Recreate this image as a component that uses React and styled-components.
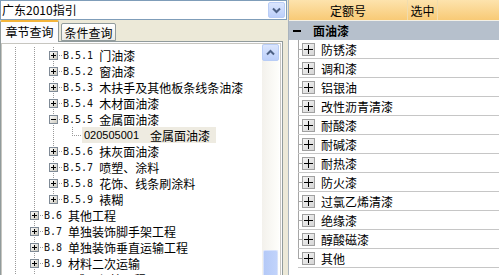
import React from "react";
import styled, { createGlobalStyle } from "styled-components";

const GlobalStyle = createGlobalStyle`
  html, body {
    margin: 0;
    padding: 0;
    background: #ece9d8;
  }
  body {
    font-family: "Noto Sans CJK SC", "DejaVu Sans", sans-serif;
    font-size: 12px;
    color: #000;
  }
`;

const Window = styled.div`
  display: flex;
  width: 499px;
  height: 275px;
  overflow: hidden;
  background: #ece9d8;
`;

const LeftPane = styled.div`
  width: 287px;
  display: flex;
  flex-direction: column;
  flex-shrink: 0;
`;

const Combo = styled.div`
  height: 20px;
  box-sizing: border-box;
  border: 1px solid #7f9db9;
  background: #fff;
  display: flex;
  align-items: center;
  justify-content: space-between;
  padding-left: 1px;
  line-height: 16px;
`;

const XpButton = styled.div`
  width: 17px;
  height: ${(p) => p.h || 16}px;
  box-sizing: border-box;
  border: 1px solid #b9cdf6;
  border-radius: 2px;
  background: linear-gradient(#dbe6fe, #bccffa);
  display: flex;
  align-items: center;
  justify-content: center;
  margin-right: ${(p) => p.mr || 0}px;
`;

const TabStrip = styled.div`
  height: 21px;
  display: flex;
  align-items: flex-end;
  position: relative;
  z-index: 1;
`;

const Tab = styled.div`
  box-sizing: border-box;
  width: ${(p) => p.w}px;
  height: ${(p) => (p.active ? 22 : 18)}px;
  margin-left: ${(p) => (p.active ? 0 : 2)}px;
  margin-bottom: ${(p) => (p.active ? -1 : 0)}px;
  border: 1px solid #919b9c;
  border-bottom: ${(p) => (p.active ? "none" : "1px solid #919b9c")};
  border-top: ${(p) => (p.active ? "2px solid #f4b53b" : "1px solid #919b9c")};
  border-radius: 2px 2px 0 0;
  background: ${(p) => (p.active ? "#fcfcfe" : "linear-gradient(#ffffff, #ecebe5)")};
  display: flex;
  align-items: center;
  justify-content: center;
  font-size: 12px;
  padding-bottom: ${(p) => (p.active ? 2 : 0)}px;
`;

const TabPanel = styled.div`
  width: 283px;
  flex: 1;
  box-sizing: border-box;
  border: 1px solid #919b9c;
  border-bottom: none;
  background: #fcfcfe;
  padding: 1px 1px 0 0;
  display: flex;
  min-height: 0;
`;

const TreeBox = styled.div`
  flex: 1;
  display: flex;
  border: 1px solid #c7c6c0;
  border-bottom: none;
  background: #fff;
  min-height: 0;
`;

const TreeBody = styled.div`
  flex: 1;
  padding-top: 3px;
  overflow: hidden;
`;

const dotsV = "repeating-linear-gradient(to bottom, #9a9a9a 0 1px, transparent 1px 2px)";
const dotsH = "repeating-linear-gradient(to right, #9a9a9a 0 1px, transparent 1px 2px)";

const Row = styled.div`
  height: 16px;
  display: flex;
  align-items: stretch;
  white-space: nowrap;
`;

const Guide = styled.div`
  width: 19px;
  flex-shrink: 0;
  background: ${(p) => (p.line ? dotsV : "none")};
  background-size: 1px 100%;
  background-position: 13px 0;
  background-repeat: no-repeat;
`;

const NodeCell = styled.div`
  width: 23px;
  flex-shrink: 0;
  display: flex;
  align-items: center;
  padding-left: 9px;
  box-sizing: border-box;
  background-image: ${dotsV}, ${dotsH};
  background-size: 1px ${(p) => (p.last ? "8px" : "100%")}, 10px 1px;
  background-position: 13px 0, 13px 8px;
  background-repeat: no-repeat;
`;

const Label = styled.div`
  display: flex;
  align-items: center;
  padding: 0 ${(p) => (p.selected ? 6 : 1)}px 0 ${(p) => (p.selected ? 2 : 0)}px;
  background: ${(p) => (p.selected ? "#eeebe1" : "transparent")};
  font-size: 12px;
`;

const Code = styled.span`
  font-family: "DejaVu Sans Mono", "Liberation Mono", monospace;
  font-size: 10px;
  white-space: pre;
  color: #111;
`;

const LeafCode = styled.span`
  font-family: "Liberation Sans", sans-serif;
  font-size: 11px;
  margin-right: 11px;
`;

const Scrollbar = styled.div`
  width: 17px;
  flex-shrink: 0;
  display: flex;
  flex-direction: column;
  align-items: center;
  background: linear-gradient(to right, #f3f1ec, #fefefb);
  margin-right: 1px;
`;

const Track = styled.div`
  flex: 1;
  display: flex;
  flex-direction: column;
  justify-content: flex-end;
  width: 100%;
  align-items: center;
`;

const Thumb = styled.div`
  width: 15px;
  height: 25px;
  box-sizing: border-box;
  border: 1px solid #d7e2fb;
  border-bottom: none;
  border-radius: 2px 2px 0 0;
  background: linear-gradient(to right, #b4c9f7, #c1d3fb);
`;

const Splitter = styled.div`
  width: 1px;
  flex-shrink: 0;
  background: #ece9d8;
`;

const RightPane = styled.div`
  flex: 1;
  display: flex;
  flex-direction: column;
  background: #fff;
  border-left: 1px solid #a9b3bd;
`;

const Header = styled.div`
  height: 21px;
  display: grid;
  grid-template-columns: 119px 30px 1fr;
  background: linear-gradient(#fde3ad, #f8ca76);
  border-bottom: 1px solid #f3f0e6;
  box-sizing: border-box;
`;

const HeadCell = styled.div`
  display: flex;
  align-items: center;
  justify-content: center;
  border-right: 1px solid ${(p) => (p.plain ? "transparent" : "#f0dcae")};
`;

const Group = styled.div`
  height: 19px;
  display: flex;
  align-items: center;
  background: #b6c0cc;
  font-weight: bold;
  font-size: 12px;
`;

const MinusBar = styled.span`
  width: 8px;
  height: 2px;
  background: #000;
  margin: 0 12px 0 4px;
`;

const DataRow = styled.div`
  height: 19px;
  display: flex;
  padding-left: 9px;
`;

const DataCell = styled.div`
  flex: 1;
  display: flex;
  align-items: center;
  border-bottom: 1px solid #c6c6c6;
  background-image: linear-gradient(#a6a6a6, #a6a6a6), linear-gradient(#a6a6a6, #a6a6a6);
  background-size: 1px ${(p) => (p.last ? "10px" : "100%")}, 5px 1px;
  background-position: 0 0, 0 9px;
  background-repeat: no-repeat;
  padding-left: 4px;
`;

const DataText = styled.span`
  margin-left: 6px;
  font-size: 12px;
`;

const Chevron = ({ up }) => (
  <svg width="9" height="7" viewBox="0 0 9 7">
    <path
      d={up ? "M1 5.5 L4.5 2 L8 5.5" : "M1 1.5 L4.5 5 L8 1.5"}
      fill="none"
      stroke="#4d6185"
      strokeWidth="2"
    />
  </svg>
);

const ExpandBox = ({ open }) => (
  <svg width="9" height="9" viewBox="0 0 9 9">
    <defs>
      <linearGradient id="eb" x1="0" y1="0" x2="1" y2="1">
        <stop offset="0" stopColor="#ffffff" />
        <stop offset="1" stopColor="#c9c6ba" />
      </linearGradient>
    </defs>
    <rect x="0.5" y="0.5" width="8" height="8" fill="url(#eb)" stroke="#7f8a96" />
    <path d="M2 4.5 H7" stroke="#000" />
    {!open && <path d="M4.5 2 V7" stroke="#000" />}
  </svg>
);

const BigPlus = () => (
  <svg width="13" height="13" viewBox="0 0 13 13">
    <defs>
      <linearGradient id="bp" x1="0" y1="0" x2="1" y2="1">
        <stop offset="0" stopColor="#f6f6f6" />
        <stop offset="1" stopColor="#d4d4d4" />
      </linearGradient>
    </defs>
    <rect x="0.5" y="0.5" width="12" height="12" fill="url(#bp)" stroke="#a0a0a0" />
    <path d="M2 6.5 H11 M6.5 2 V11" stroke="#000" />
  </svg>
);

const tree = [
  { depth: 2, code: "B.5.1", name: "门油漆" },
  { depth: 2, code: "B.5.2", name: "窗油漆" },
  { depth: 2, code: "B.5.3", name: "木扶手及其他板条线条油漆" },
  { depth: 2, code: "B.5.4", name: "木材面油漆" },
  { depth: 2, code: "B.5.5", name: "金属面油漆", open: true },
  { depth: 3, leaf: true, code: "020505001", name: "金属面油漆", selected: true, last: true },
  { depth: 2, code: "B.5.6", name: "抹灰面油漆" },
  { depth: 2, code: "B.5.7", name: "喷塑、涂料" },
  { depth: 2, code: "B.5.8", name: "花饰、线条刷涂料" },
  { depth: 2, code: "B.5.9", name: "裱糊", last: true },
  { depth: 1, code: "B.6", name: "其他工程" },
  { depth: 1, code: "B.7", name: "单独装饰脚手架工程" },
  { depth: 1, code: "B.8", name: "单独装饰垂直运输工程" },
  { depth: 1, code: "B.9", name: "材料二次运输" },
  { depth: 1, code: "B.10", name: "成品保护工程" },
];

const items = [
  "防锈漆",
  "调和漆",
  "铝银油",
  "改性沥青清漆",
  "耐酸漆",
  "耐碱漆",
  "耐热漆",
  "防火漆",
  "过氯乙烯清漆",
  "绝缘漆",
  "醇酸磁漆",
  "其他",
];

const TreeRow = ({ node }) => (
  <Row>
    {Array.from({ length: node.depth }).map((_, i) => (
      <Guide key={i} line />
    ))}
    <NodeCell last={node.last}>{!node.leaf && <ExpandBox open={node.open} />}</NodeCell>
    <Label selected={node.selected}>
      {node.leaf ? <LeafCode>{node.code}</LeafCode> : <Code>{node.code + " "}</Code>}
      {node.name}
    </Label>
  </Row>
);

export default function App() {
  return (
    <>
      <GlobalStyle />
      <Window>
        <LeftPane>
          <Combo>
            <span>广东2010指引</span>
            <XpButton mr={1}>
              <Chevron />
            </XpButton>
          </Combo>
          <TabStrip>
            <Tab active w={59}>章节查询</Tab>
            <Tab w={55}>条件查询</Tab>
          </TabStrip>
          <TabPanel>
            <TreeBox>
              <TreeBody>
                {tree.map((n, i) => (
                  <TreeRow key={i} node={n} />
                ))}
              </TreeBody>
              <Scrollbar>
                <XpButton h={17}>
                  <Chevron up />
                </XpButton>
                <Track>
                  <Thumb />
                </Track>
              </Scrollbar>
            </TreeBox>
          </TabPanel>
        </LeftPane>
        <Splitter />
        <RightPane>
          <Header>
            <HeadCell>定额号</HeadCell>
            <HeadCell>选中</HeadCell>
            <HeadCell plain />
          </Header>
          <Group>
            <MinusBar />
            面油漆
          </Group>
          {items.map((t, i) => (
            <DataRow key={t}>
              <DataCell last={i === items.length - 1}>
                <BigPlus />
                <DataText>{t}</DataText>
              </DataCell>
            </DataRow>
          ))}
        </RightPane>
      </Window>
    </>
  );
}
